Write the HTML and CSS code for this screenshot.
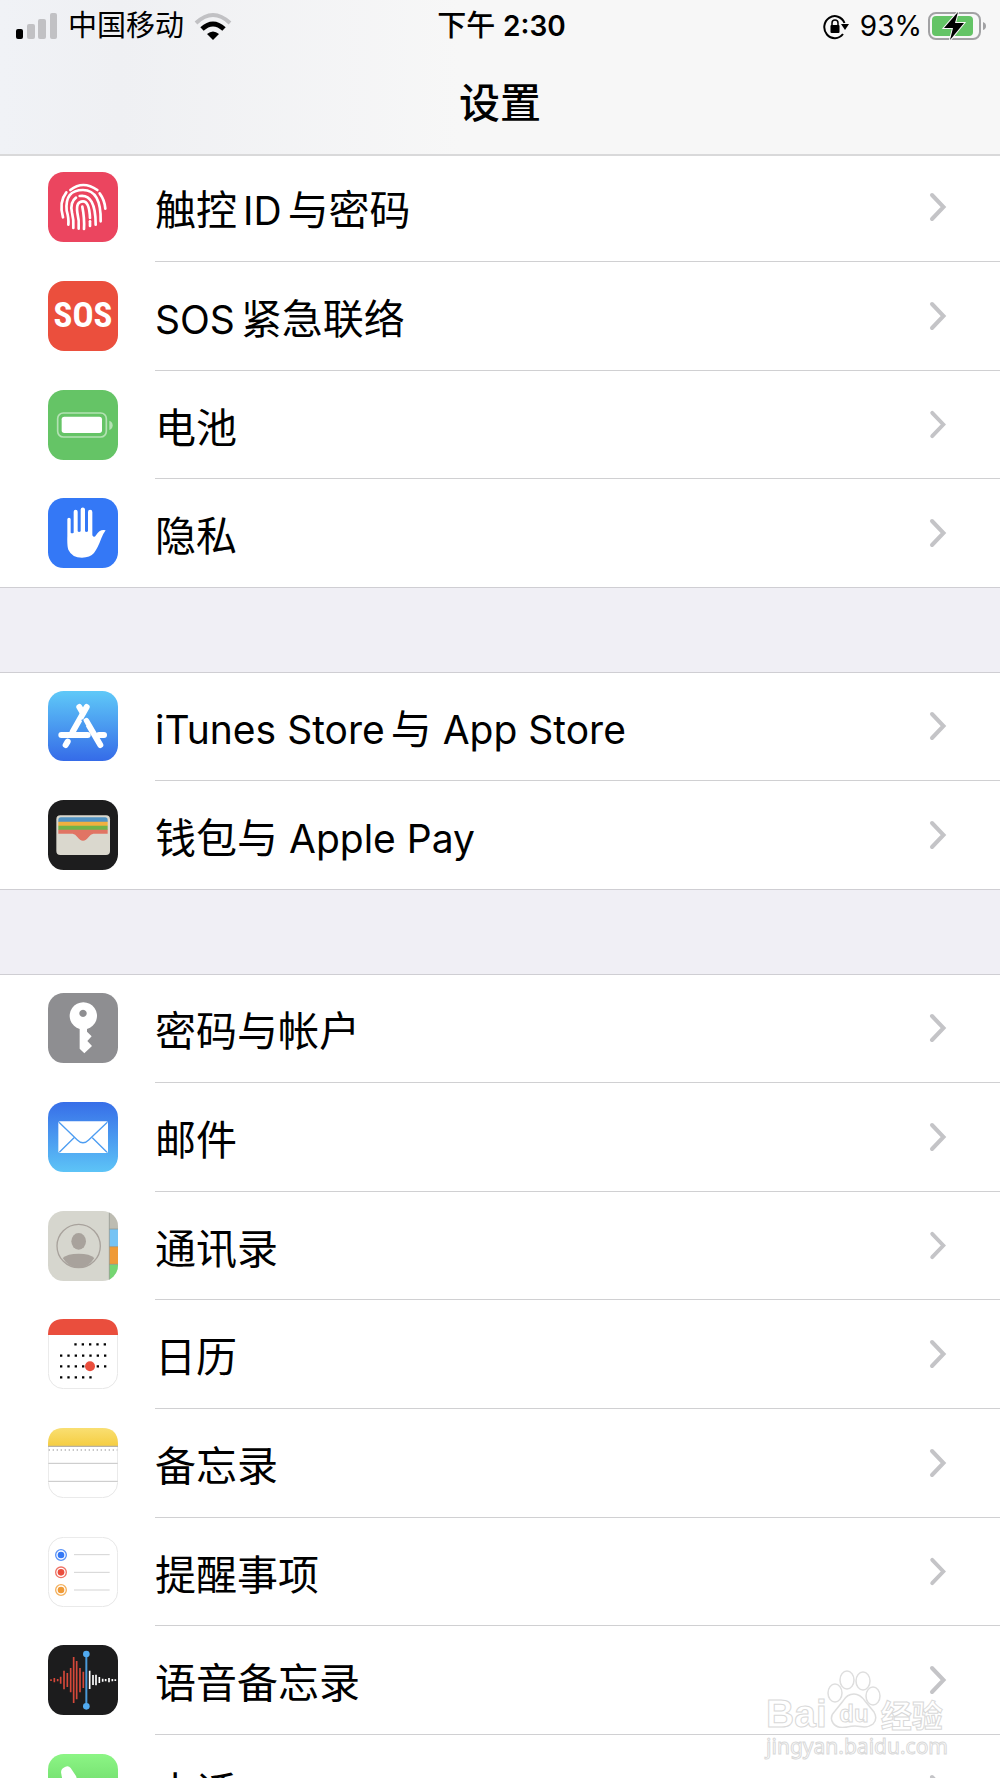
FILE: index.html
```html
<!DOCTYPE html>
<html lang="zh-CN">
<head>
<meta charset="utf-8">
<meta name="viewport" content="width=device-width, initial-scale=1">
<title>设置</title>
<link rel="stylesheet" href="styles.css">
</head>
<body>
<svg width="0" height="0" class="defs" aria-hidden="true">
  <defs>
    <linearGradient id="blue-down" x1="0" y1="0" x2="0" y2="1"><stop offset="0" stop-color="#5fc9f8"/><stop offset="1" stop-color="#356be8"/></linearGradient>
    <linearGradient id="blue-up" x1="0" y1="0" x2="0" y2="1"><stop offset="0" stop-color="#376ee8"/><stop offset="1" stop-color="#5dc4f7"/></linearGradient>
    <linearGradient id="yellow" x1="0" y1="0" x2="0" y2="1"><stop offset="0" stop-color="#f9df72"/><stop offset="1" stop-color="#f5cd41"/></linearGradient>
    <linearGradient id="green" x1="0" y1="0" x2="0" y2="1"><stop offset="0" stop-color="#8cf585"/><stop offset="1" stop-color="#55c454"/></linearGradient>
    <clipPath id="tile"><rect width="210" height="210" rx="47"/></clipPath>
    <symbol id="chevron" viewBox="0 0 18 30"><path d="M3 3 14.500 15 3 27" fill="none" stroke="#c4c4c7" stroke-width="4" stroke-linecap="round" stroke-linejoin="miter"/></symbol>
  </defs>
</svg>
<div class="screen">
  <header class="top">
    <div class="status">
      <div class="status-left">
        <svg class="signal" viewBox="0 0 42 28" aria-hidden="true"><rect x="0" y="17" width="7" height="10" rx="2"/><g fill="#c1c1c4"><rect x="11" y="12" width="8" height="15" rx="2"/><rect x="22" y="7" width="8" height="20" rx="2"/><rect x="34" y="1" width="7" height="26" rx="2"/></g></svg>
        <span>中国移动</span>
        <svg class="wifi" viewBox="0 0 38 28" aria-hidden="true"><path d="M2 11Q19-5 36 11" fill="none" stroke="#c1c1c4" stroke-width="4"/><path d="M8 17Q19 7 30 17" fill="none" stroke="#000" stroke-width="5"/><path d="M13 22Q19 17 25 22L19 28Z"/></svg>
      </div>
      <div class="clock">下午 <b>2:30</b></div>
      <div class="status-right">
        <svg class="lock" viewBox="0 0 26 28" aria-hidden="true"><path d="M20 22A10.500 11 0 1 1 21.500 11" fill="none" stroke="#000" stroke-width="2"/><path d="M18 12h8l-4 6Z"/><rect x="7.500" y="13" width="9" height="8" rx="1"/><path d="M9 14v-3a3 3 0 0 1 6 0v3" fill="none" stroke="#000" stroke-width="1.500"/></svg>
        <span>93%</span>
        <svg class="battery" viewBox="0 0 60 32" aria-hidden="true"><rect x="2" y="3" width="51" height="26" rx="7" fill="none" stroke="#a2a2a4" stroke-width="2"/><rect x="5" y="6" width="41" height="20" rx="4" fill="#64c466"/><path d="M56 12q3 1 3 4t-3 4Z" fill="#a2a2a4"/><path d="M31 2 17 18H26L23 30 37 13H28Z" fill="#000" stroke="#f7f7f7" stroke-width="2" paint-order="stroke"/></svg>
      </div>
    </div>
    <h1>设置</h1>
  </header>
  <main class="list">
    <ul class="group">
      <li><a class="row" href="#touch-id">
        <svg class="icon" viewBox="0 0 210 210"><rect width="210" height="210" rx="47" fill="#eb455f"/><g fill="none" stroke="#fff" stroke-width="8" stroke-linecap="round"><path d="M67 54Q105 24 148 54"/><path d="M55 61Q32 90 45 136"/><path d="M155 64Q170 84 172 110"/><path d="M61 158Q63 140 56 116Q50 54 105 54Q160 54 158 148"/><path d="M76 168Q78 145 72 122Q65 91 84 77"/><path d="M95 72Q143 64 143 158"/><path d="M92 170Q94 145 88 122Q83 88 105 88Q124 88 126 138"/><path d="M126 148V162"/><path d="M108 171Q110 140 103 104"/></g></svg>
        <span class="label">触控<i></i><span class="latin">ID</span><i></i>与密码</span><svg class="chevron" aria-hidden="true"><use href="#chevron"/></svg></a></li>
      <li><a class="row" href="#sos">
        <span class="icon sos">SOS</span>
        <span class="label"><span class="latin">SOS</span><i></i>紧急联络</span><svg class="chevron" aria-hidden="true"><use href="#chevron"/></svg></a></li>
      <li><a class="row" href="#battery">
        <svg class="icon" viewBox="0 0 210 210"><rect width="210" height="210" rx="47" fill="#65c466"/><rect x="29" y="69" width="146" height="72" rx="17" fill="none" stroke="#b4e2b4" stroke-width="5"/><rect x="41" y="80" width="121" height="49" rx="8" fill="#fff"/><path d="M184 92q10 3 10 14t-10 14Z" fill="#b4e2b4"/></svg>
        <span class="label">电池</span><svg class="chevron" aria-hidden="true"><use href="#chevron"/></svg></a></li>
      <li><a class="row" href="#privacy">
        <svg class="icon" viewBox="0 0 210 210"><rect width="210" height="210" rx="47" fill="#3478f6"/><path d="M58 64a5 5 0 0 1 10 0V104q4 4 9 0V41a6 6 0 0 1 12 0V100q4 4 9 0V35a6 6 0 0 1 13 0V100q4 4 9 0V42a6 6 0 0 1 13 0V112q5 9 11 0 12-20 29-15-7 9-13 24-10 28-22 44-12 14-36 14-30 0-41-24-4-10-3-40Z" fill="#fff"/></svg>
        <span class="label">隐私</span><svg class="chevron" aria-hidden="true"><use href="#chevron"/></svg></a></li>
    </ul>
    <ul class="group">
      <li><a class="row" href="#stores">
        <svg class="icon" viewBox="0 0 210 210"><rect width="210" height="210" rx="47" fill="url(#blue-down)"/><g fill="none" stroke="#fff" stroke-width="18" stroke-linecap="round"><path d="M94 48 104 65"/><path d="M116 48 74 122" /><path d="M40 132H119"/><path d="M153 132H168"/><path d="M115 90 157 162"/><path d="M59 152 53 162"/></g><path d="M102 86 113 106" stroke="#4b9cf1" stroke-width="5"/></svg>
        <span class="label"><span class="latin">iTunes Store</span><i></i>与<span class="latin"> App Store</span></span><svg class="chevron" aria-hidden="true"><use href="#chevron"/></svg></a></li>
      <li><a class="row" href="#wallet">
        <svg class="icon" viewBox="0 0 210 210"><rect width="210" height="210" rx="47" fill="#1d1d1e"/><rect x="25" y="46" width="161" height="119" rx="12" fill="#dad8ce"/><path d="M31 66V60q0-8 8-8H171q8 0 8 8v6Z" fill="#5193c3"/><path d="M31 65h148v13H31Z" fill="#f1b03f"/><path d="M31 77h148v13H31Z" fill="#72b348"/><path d="M31 89h148v12H136q-8 1-14 10-8 11-17 11-9 0-17-11-6-9-14-10H31Z" fill="#e17464"/></svg>
        <span class="label">钱包与<span class="latin"> Apple Pay</span></span><svg class="chevron" aria-hidden="true"><use href="#chevron"/></svg></a></li>
    </ul>
    <ul class="group">
      <li><a class="row" href="#passwords">
        <svg class="icon" viewBox="0 0 210 210"><rect width="210" height="210" rx="47" fill="#8e8e91"/><path fill-rule="evenodd" d="M95 108a41 41 0 1 1 22 0V116l14 14-13 14 14 15-23 22-14-14ZM105 50a11 11 0 1 0 .1 0Z" fill="#fff"/></svg>
        <span class="label">密码与帐户</span><svg class="chevron" aria-hidden="true"><use href="#chevron"/></svg></a></li>
      <li><a class="row" href="#mail">
        <svg class="icon" viewBox="0 0 210 210"><rect width="210" height="210" rx="47" fill="url(#blue-up)"/><rect x="31" y="58" width="149" height="95" rx="5" fill="#fff"/><path d="M33 61 88 114Q105 131 122 114L178 61M34 151 78 107M177 151 133 107" fill="none" stroke="#4d9df2" stroke-width="4"/></svg>
        <span class="label">邮件</span><svg class="chevron" aria-hidden="true"><use href="#chevron"/></svg></a></li>
      <li><a class="row" href="#contacts">
        <svg class="icon" viewBox="0 0 210 210"><g clip-path="url(#tile)"><rect width="210" height="210" fill="#d6d6ce"/><rect x="184" width="26" height="54" fill="#bdbcb2"/><rect x="184" y="54" width="26" height="53" fill="#76c3f4"/><rect x="184" y="107" width="26" height="53" fill="#ef9a37"/><rect x="184" y="160" width="26" height="50" fill="#75d672"/><path d="M184 0V210M184 54h26M184 107h26M184 160h26" stroke="#8d918b" stroke-width="2"/></g><ellipse cx="92" cy="91" rx="22" ry="25" fill="#a8a29c"/><path d="M44 141Q58 128 92 128T139 141Q122 170 92 170T44 141Z" fill="#a8a29c"/><circle cx="92" cy="105" r="65" fill="none" stroke="#a8a29c" stroke-width="4"/></svg>
        <span class="label">通讯录</span><svg class="chevron" aria-hidden="true"><use href="#chevron"/></svg></a></li>
      <li><a class="row" href="#calendar">
        <svg class="icon" viewBox="0 0 210 210"><rect x="1" y="1" width="208" height="208" rx="46" fill="#fff" stroke="#e7e7e7" stroke-width="3"/><path d="M0 48Q0 0 47 0H163Q210 0 210 48Z" fill="#ea4e3d"/><g stroke="#000" stroke-width="7" stroke-dasharray="7 15"><path d="M79 76h100M36 110h144M36 142h144M36 175h96"/></g><circle cx="126" cy="142" r="15" fill="#ea4e3d"/></svg>
        <span class="label">日历</span><svg class="chevron" aria-hidden="true"><use href="#chevron"/></svg></a></li>
      <li><a class="row" href="#notes">
        <svg class="icon" viewBox="0 0 210 210"><rect x="1" y="1" width="208" height="208" rx="46" fill="#fff" stroke="#e7e7e7" stroke-width="3"/><path d="M0 55V48Q0 0 47 0H163Q210 0 210 48V55Z" fill="url(#yellow)"/><path d="M0 55H210" stroke="#b7b2a6" stroke-width="4"/><path d="M2 66H208" stroke="#b5b5b5" stroke-width="4" stroke-dasharray="4 8"/><path d="M1 106H209M1 160H209" stroke="#c4c4c4" stroke-width="3"/></svg>
        <span class="label">备忘录</span><svg class="chevron" aria-hidden="true"><use href="#chevron"/></svg></a></li>
      <li><a class="row" href="#reminders">
        <svg class="icon" viewBox="0 0 210 210"><rect x="1" y="1" width="208" height="208" rx="46" fill="#fff" stroke="#e7e7e7" stroke-width="3"/><path d="M78 53H185M78 106H185M78 159H185" stroke="#d3d3d3" stroke-width="3"/><g fill="none" stroke-width="4"><circle cx="39" cy="54" r="16" stroke="#5b93f7"/><circle cx="39" cy="106" r="16" stroke="#ef7265"/><circle cx="39" cy="159" r="16" stroke="#f3b05c"/></g><circle cx="39" cy="54" r="10" fill="#3478f6"/><circle cx="39" cy="106" r="10" fill="#ea4e3d"/><circle cx="39" cy="159" r="10" fill="#f09a37"/></svg>
        <span class="label">提醒事项</span><svg class="chevron" aria-hidden="true"><use href="#chevron"/></svg></a></li>
      <li><a class="row" href="#voice-memos">
        <svg class="icon" viewBox="0 0 210 210"><rect width="210" height="210" rx="47" fill="#1c1c1d"/><path d="M9 103v5M19 99v13M29 102v7M38 95v21M48 77v56M58 84v42M68 69v73M77 36v138M86 48v115M96 69v73M106 80v49" stroke="#d5483a" stroke-width="5"/><path d="M125 77v55M135 90v30M144 89v32M154 96v18M164 101v9M173 102v7M183 99v13M193 102v7M202 103v5" stroke="#fff" stroke-width="5"/><path d="M115 27V183" stroke="#4a99d9" stroke-width="6"/><g fill="#51aaf0"><circle cx="115" cy="27" r="10"/><circle cx="115" cy="184" r="10"/></g></svg>
        <span class="label">语音备忘录</span><svg class="chevron" aria-hidden="true"><use href="#chevron"/></svg></a></li>
      <li><a class="row" href="#phone">
        <svg class="icon" viewBox="0 0 210 210"><rect width="210" height="210" rx="47" fill="url(#green)"/><path d="M40 60Q36 45 51 39 61 33 68 42L84 66Q89 75 79 83 71 90 77 99 92 125 112 136 120 140 126 132 134 121 144 127L167 143Q176 150 169 160 158 174 145 172 105 166 72 130 45 98 40 60Z" fill="#fff"/></svg>
        <span class="label">电话</span><svg class="chevron" aria-hidden="true"><use href="#chevron"/></svg></a></li>
    </ul>
  </main>
  <div class="watermark">
    <div class="brand"><span>Bai</span>
      <svg class="paw" viewBox="0 0 54 58" aria-hidden="true"><g fill="#fff" stroke="#dedede" stroke-width="1.500"><ellipse cx="8" cy="23" rx="7" ry="9"/><ellipse cx="20" cy="10" rx="7" ry="9"/><ellipse cx="36" cy="11" rx="7" ry="9"/><ellipse cx="46" cy="26" rx="7" ry="9"/><path d="M27 24Q33 24 38 31L47 42Q51 49 46 54 41 58 33 56.500 27 55.500 20 57 10 59 6 53 2 47 8 41L16 31Q20 24 27 24Z"/></g><text x="27" y="52" text-anchor="middle">du</text></svg>
      <span class="cn">经验</span></div>
    <div class="site">jingyan.baidu.com</div>
  </div>
</div>
</body>
</html>
```
FILE: styles.css
```css
* { box-sizing: border-box; }
body {
  margin: 0;
  background: #f0eff5;
  color: #000;
  font-family: "Inter", "Noto Sans CJK SC", sans-serif;
}
.defs { position: absolute; }
.screen {
  position: relative;
  height: 100vh;
  display: flex;
  flex-direction: column;
  overflow: hidden;
}

/* Status bar and title */
.top {
  flex: none;
  z-index: 1;
  margin-bottom: -3px;
  border-bottom: 2px solid #d9d9da;
  background: linear-gradient(90deg, #f0f2f6, #eff0f3 12%, #f7f7f7 46%);
}
.status {
  display: grid;
  grid-template-columns: 1fr auto 1fr;
  align-items: center;
  height: 50px;
  padding: 0 13px 0 16px;
  font-size: 29px;
  line-height: 52px;
}
.status-left, .status-right { display: flex; align-items: center; }
.status-left { gap: 10px; }
.status-right { justify-content: flex-end; gap: 5px; font-size: 28px; }
.signal { width: 42px; height: 28px; }
.wifi { width: 38px; height: 28px; }
.lock { width: 26px; height: 28px; margin-right: 6px; }
.battery { width: 60px; height: 32px; }
.clock { font-weight: 500; }
.clock b { font-size: 28px; font-weight: 600; }
h1 {
  margin: 0;
  height: 104px;
  font-size: 41px;
  font-weight: 500;
  line-height: 106px;
  text-align: center;
}

/* Settings list */
.list { flex: 1; min-height: 0; overflow: hidden; }
.group {
  margin: 0 0 84px;
  padding: 0;
  list-style: none;
  background: #fff;
  border-bottom: 1px solid #cfced3;
}
.group + .group { box-shadow: inset 0 1px #cfced3; }
.group li { height: 109px; }
.group li:nth-child(3n) { height: 108px; }
.group li:last-child { height: 108px; }
.row {
  display: flex;
  height: 100%;
  padding-left: 48px;
  color: inherit;
  text-decoration: none;
}
.icon { flex: none; width: 70px; height: 70px; margin: 19px 37px 0 0; }
.sos {
  border-radius: 16px;
  background: #eb4f3d;
  color: #fff;
  font: 700 35px/70px "Liberation Sans Narrow", "Roboto Condensed", "Roboto", sans-serif;
  text-align: center;
}
.label {
  flex: 1;
  padding-top: 3px;
  border-bottom: 1px solid #d0d0d2;
  font-size: 41px;
  line-height: 104px;
  padding-top: 5px;
  height: 100%;
  white-space: nowrap;
}
.label i { display: inline-block; width: 6px; }
.latin { font-size: 39px; }
.chevron {
  width: 71px;
  height: 100%;
  padding: 39px 53px 39px 0;
  border-bottom: 1px solid #d0d0d2;
}
li:last-child .label, li:last-child .chevron { border-bottom: 0; }

/* Watermark over the list */
.watermark {
  position: absolute;
  z-index: 2;
  right: 52px;
  bottom: 20px;
  color: #fff;
  -webkit-text-stroke: 1px #d9d9d9;
}
.brand {
  display: flex;
  align-items: flex-end;
  font: 700 39px/40px "Liberation Sans", sans-serif;
}
.cn { font: 700 31px/40px "Noto Sans CJK SC", sans-serif; }
.paw { width: 54px; height: 58px; margin-bottom: 6px; }
.paw text { font: 700 24px "Liberation Sans", sans-serif; fill: #fff; stroke: #d9d9d9; stroke-width: 1px; }
.site { font: 21px/24px "Noto Sans", sans-serif; }
```
